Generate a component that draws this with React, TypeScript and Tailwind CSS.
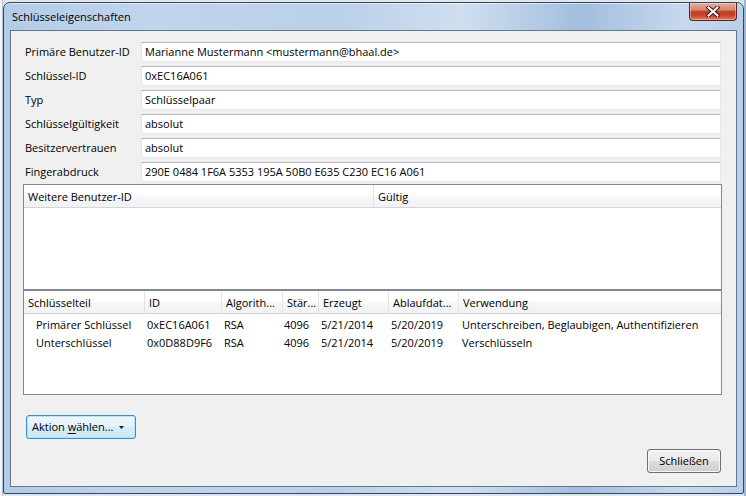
import React from "react";

const fields = [
  { label: "Primäre Benutzer-ID", value: "Marianne Mustermann <mustermann@bhaal.de>" },
  { label: "Schlüssel-ID", value: "0xEC16A061" },
  { label: "Typ", value: "Schlüsselpaar" },
  { label: "Schlüsselgültigkeit", value: "absolut" },
  { label: "Besitzervertrauen", value: "absolut" },
  { label: "Fingerabdruck", value: "290E 0484 1F6A 5353 195A 50B0 E635 C230 EC16 A061" },
];

const subkeyCols = [
  { title: "Schlüsselteil", w: "w-[121px]" },
  { title: "ID", w: "w-[77px]" },
  { title: "Algorith...", w: "w-[61px]" },
  { title: "Stär...", w: "w-[36px]" },
  { title: "Erzeugt", w: "w-[70px]" },
  { title: "Ablaufdat...", w: "w-[70px]" },
  { title: "Verwendung", w: "flex-1" },
];

const subkeys = [
  ["Primärer Schlüssel", "0xEC16A061", "RSA", "4096", "5/21/2014", "5/20/2019", "Unterschreiben, Beglaubigen, Authentifizieren"],
  ["Unterschlüssel", "0x0D88D9F6", "RSA", "4096", "5/21/2014", "5/20/2019", "Verschlüsseln"],
];

const headerBg = "bg-[linear-gradient(180deg,#ffffff_0%,#ffffff_45%,#f5f6f7_55%,#f1f2f4_100%)]";

const CloseButton = () => (
  <div className="w-[48px] h-[18px] rounded-b-[4px] border border-t-0 border-[#5e2419] bg-[linear-gradient(180deg,#e9ac9c_0%,#d98670_40%,#c2391f_52%,#c9482e_75%,#e07e64_100%)] flex items-center justify-center shadow-[inset_0_0_0_1px_rgba(255,255,255,0.35)]">
    <svg width="14" height="11" viewBox="0 0 14 11">
      <path d="M2.5 1.5 L11.5 9.5 M11.5 1.5 L2.5 9.5" stroke="#3b1b16" strokeWidth="4" strokeLinecap="square" />
      <path d="M2.5 1.5 L11.5 9.5 M11.5 1.5 L2.5 9.5" stroke="#ffffff" strokeWidth="2" strokeLinecap="square" />
    </svg>
  </div>
);

export default function App() {
  return (
    <div className="w-[746px] h-[496px] overflow-hidden flex bg-[#dfe6ee] text-[11px] text-black font-['Open_Sans','Liberation_Sans',Arial,sans-serif]">
      {/* --- desktop behind the dialog --- */}
      <div className="w-[3px] h-full bg-[linear-gradient(90deg,#f4f4f4_0%,#f4f4f4_50%,#8fa9cb_100%)]" />

      {/* --- dialog window --- */}
      <div className="mt-[2px] w-[741px] h-[492px] flex flex-col border border-[#33465e] rounded-t-[7px] rounded-b-[2px] bg-[linear-gradient(90deg,#b3cbe6_0%,#c0d5ec_20%,#bad0e9_45%,#cfdff0_62%,#a2bedd_78%,#c7d9ee_92%,#b9cfe8_100%)] shadow-[inset_0_1px_0_rgba(255,255,255,0.6)]">
        {/* title bar */}
        <div className="h-[27px] flex justify-between">
          <span className="pl-[8px] pt-[6px] leading-[16px]">Schlüsseleigenschaften</span>
          <div className="mr-[6px]">
            <CloseButton />
          </div>
        </div>

        {/* client area */}
        <div className="ml-[6px] mr-[6px] h-[457px] border border-[#62768c] bg-[#f0f0f0] flex flex-col pt-[11px] pl-[12px] pr-[14px]">
          {/* --- key fields --- */}
          <div className="flex flex-col gap-[4px] pl-[2px] pr-[1px]">
            {fields.map((f) => (
              <div key={f.label} className="flex items-center h-[20px]">
                <span className="w-[116px] leading-[16px]">{f.label}</span>
                <div className="flex-1 h-[20px] bg-white border border-[#e3e5ea] border-t-[#b5b8bf] flex items-center pl-[3px] leading-[16px]">
                  {f.value}
                </div>
              </div>
            ))}
          </div>

          {/* --- further user ids --- */}
          <div className="mt-[2px] h-[106px] border border-[#828790] bg-white flex flex-col">
            <div className={`h-[23px] flex border-b border-[#d5d5d5] ${headerBg}`}>
              <div className="w-[350px] border-r border-[#e3e4e8] pl-[4px] pt-[4px] leading-[16px]">Weitere Benutzer-ID</div>
              <div className="flex-1 pl-[4px] pt-[4px] leading-[16px]">Gültig</div>
            </div>
          </div>

          {/* --- subkeys --- */}
          <div className="h-[105px] border border-[#828790] bg-white flex flex-col">
            <div className={`h-[23px] flex border-b border-[#d5d5d5] ${headerBg}`}>
              {subkeyCols.map((c, i) => (
                <div
                  key={c.title}
                  className={`${c.w} ${i < subkeyCols.length - 1 ? "border-r border-[#e3e4e8]" : ""} pl-[4px] pt-[4px] leading-[16px] whitespace-nowrap overflow-hidden`}
                >
                  {c.title}
                </div>
              ))}
            </div>
            <div className="pt-[2px] flex flex-col">
              {subkeys.map((row) => (
                <div key={row[1]} className="h-[18px] flex items-center leading-[16px] whitespace-nowrap">
                  {row.map((cell, i) => (
                    <div
                      key={i}
                      className={`${subkeyCols[i].w} ${i === 0 ? "pl-[12px]" : i === 3 ? "pl-[1px]" : i === 6 ? "pl-[3px]" : "pl-[2px]"} overflow-hidden`}
                    >
                      {cell}
                    </div>
                  ))}
                </div>
              ))}
            </div>
          </div>

          {/* --- action button --- */}
          <button className="mt-[20px] ml-[3px] w-[110px] h-[24px] rounded-[3px] border border-[#3c8dc6] bg-[linear-gradient(180deg,#eef7fd_0%,#e3f2fc_50%,#d6ecfa_51%,#cde8f9_100%)] shadow-[inset_0_0_0_1px_rgba(180,225,250,0.9)] flex items-center pl-[5px] leading-[16px] self-start">
            <span>
              Aktion <span className="underline underline-offset-[2px]">w</span>ählen...
            </span>
            <svg className="ml-[6px]" width="5" height="3" viewBox="0 0 5 3">
              <path d="M0 0 H5 L2.5 3 Z" fill="#1a1a1a" />
            </svg>
          </button>

          {/* --- close --- */}
          <button className="mt-[10px] mr-[1px] self-end w-[74px] h-[24px] rounded-[3px] border border-[#707070] bg-[linear-gradient(180deg,#f2f2f2_0%,#ebebeb_50%,#dddddd_51%,#cfcfcf_100%)] shadow-[inset_0_0_0_1px_rgba(255,255,255,0.8)] flex items-center justify-center leading-[16px]">
            Schließen
          </button>
        </div>
      </div>

      <div className="flex-1 h-full bg-[#9fb6d2]" />
    </div>
  );
}
